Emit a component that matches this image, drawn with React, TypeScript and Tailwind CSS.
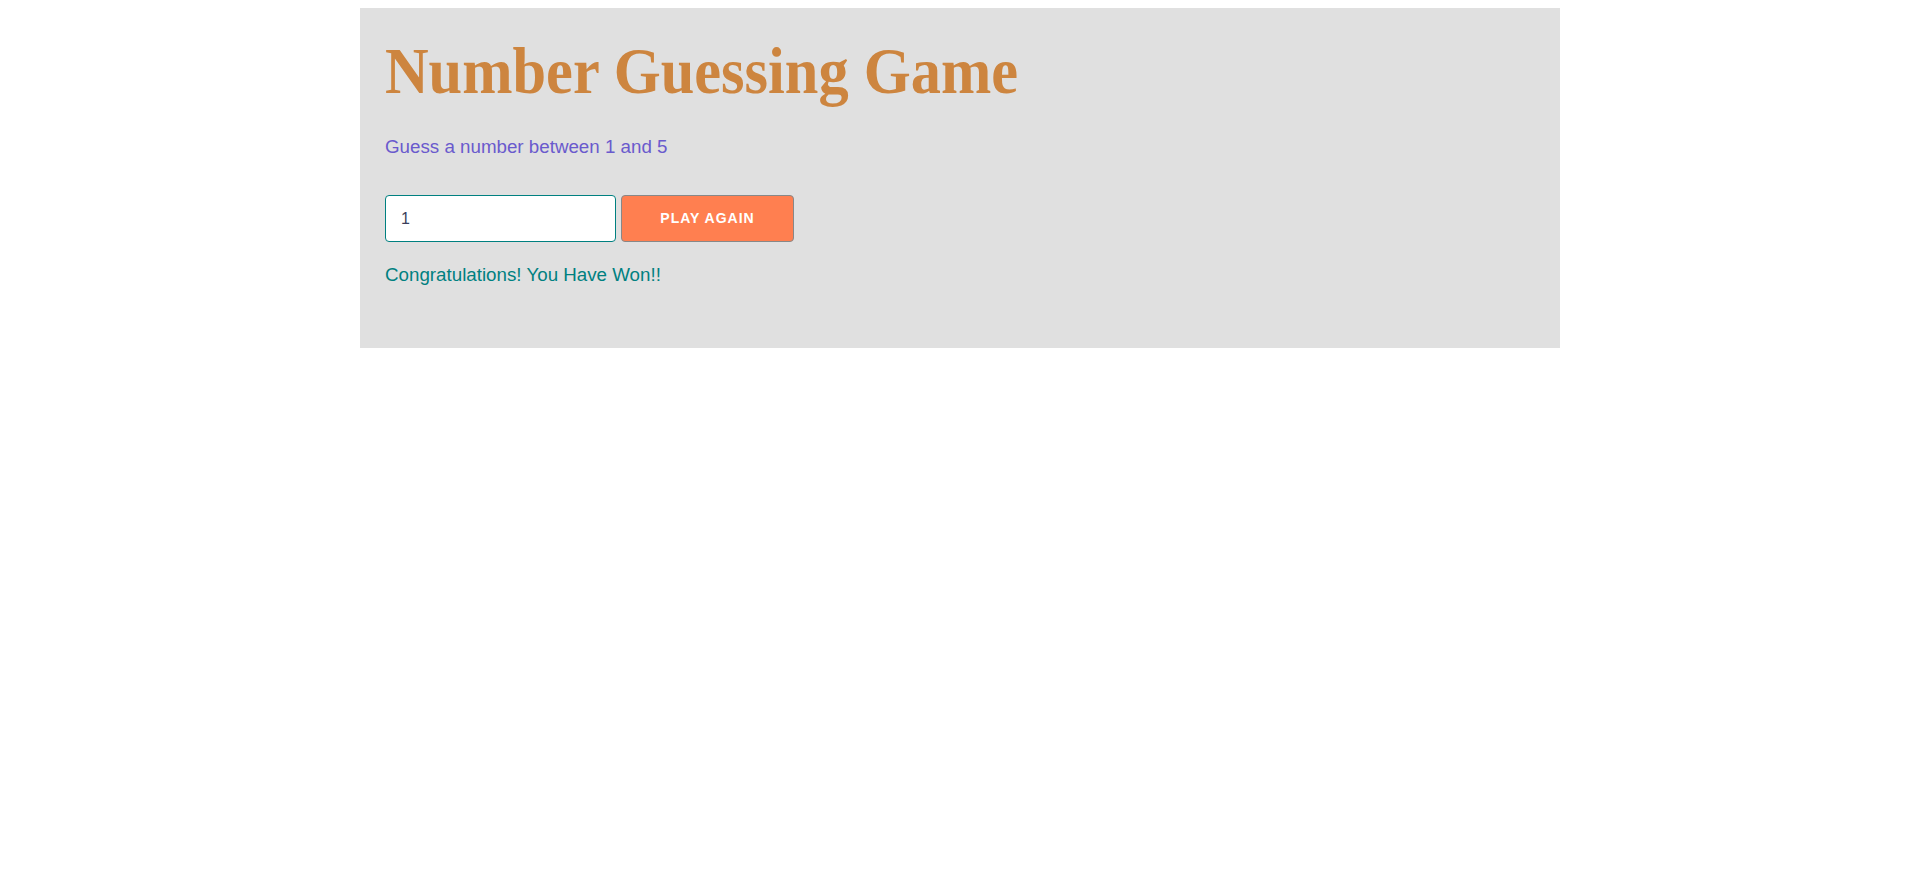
import React, { useState } from 'react';

const App = () => {
  const [guess, setGuess] = useState('1');

  return (
    <div className="min-h-screen bg-white pt-2 font-['Liberation_Sans',Arial,sans-serif]">
      <div className="mx-auto max-w-[1200px] bg-[#e0e0e0] px-[25px] pt-[27px] pb-[62px]">
        <h1 className="origin-left scale-x-[0.915] font-['Liberation_Serif','Times_New_Roman',serif] text-[66px] font-bold leading-[1.1] text-[#cd853f]">
          Number Guessing Game
        </h1>
        <p className="mt-[28px] text-[18.75px] leading-[1.15] text-[#6a5acd]">
          Guess a number between 1 and 5
        </p>
        <div className="mt-[38px] flex items-center gap-[5px]">
          <input
            type="number"
            value={guess}
            onChange={(e) => setGuess(e.target.value)}
            className="h-[47px] w-[231px] rounded-[4px] border border-[#008080] bg-white px-[15px] text-[16px] text-[#3a3f5c] outline-none"
          />
          <button className="h-[47px] w-[173px] rounded-[4px] border border-[#888888] bg-[#ff7f50] text-[14px] font-bold uppercase tracking-[1px] text-white">
            Play Again
          </button>
        </div>
        <p className="mt-[22px] text-[18.75px] leading-[1.15] text-[#008080]">
          Congratulations! You Have Won!!
        </p>
      </div>
    </div>
  );
};

export default App;
